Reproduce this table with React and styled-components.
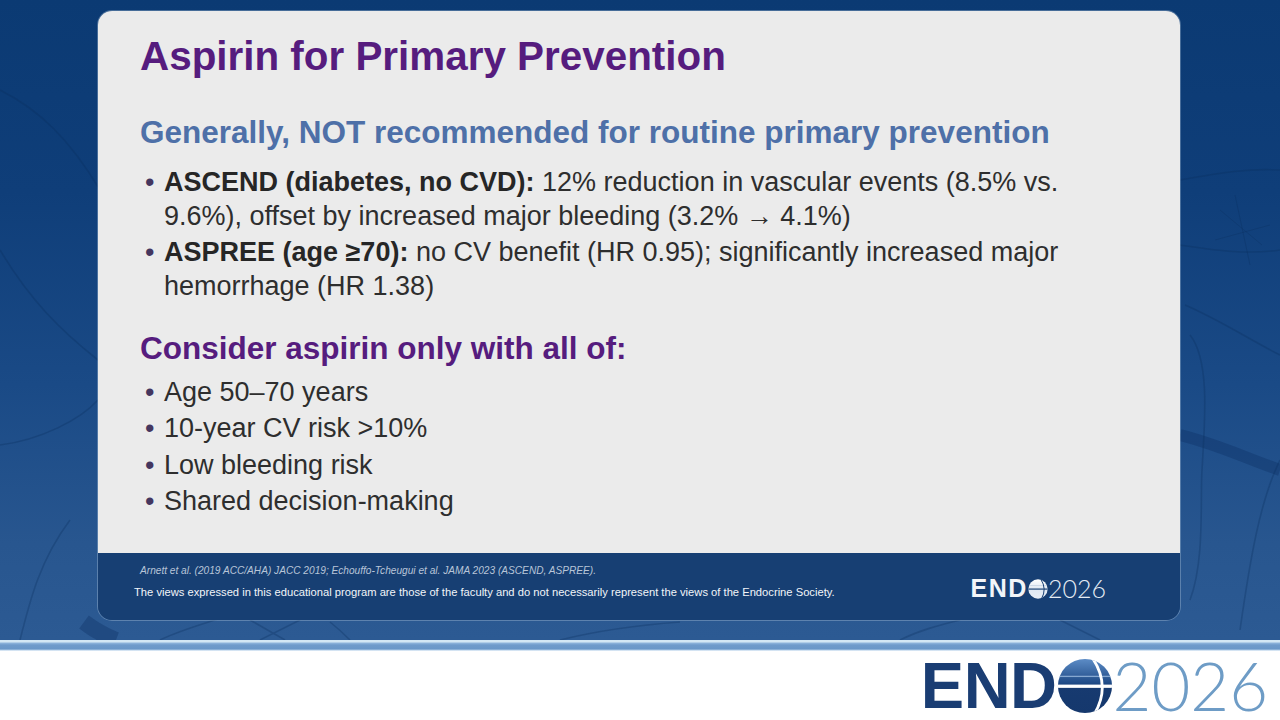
import React from "react";
import styled, { createGlobalStyle } from "styled-components";

const Global = createGlobalStyle`
  html, body { margin: 0; padding: 0; background: #ffffff; }
  body { font-family: "Liberation Sans", Arial, sans-serif; }
`;

const Page = styled.div`
  width: 1280px;
  height: 720px;
  display: flex;
  flex-direction: column;
  overflow: hidden;
  background: #ffffff;
`;

const Stage = styled.div`
  position: relative;
  height: 640px;
  flex: none;
  padding: 11px 0 0 98px;
  box-sizing: border-box;
  background: linear-gradient(180deg, #0b3a73 0%, #0f3e79 30%, #1a4a86 60%, #28568f 85%, #2c5a93 100%);
  overflow: hidden;
`;

const BgArt = styled.svg`
  position: absolute;
  inset: 0;
  width: 100%;
  height: 100%;
  z-index: 0;
  pointer-events: none;
`;

const Panel = styled.div`
  position: relative;
  z-index: 1;
  width: 1082px;
  height: 609px;
  border-radius: 14px;
  overflow: hidden;
  display: flex;
  flex-direction: column;
  box-shadow: 0 0 0 1px rgba(210, 225, 240, 0.3);
`;

const Body = styled.div`
  flex: 1;
  background: #ebebeb;
  padding: 21px 42px 0 42px;
  display: flex;
  flex-direction: column;
`;

const Title = styled.h1`
  margin: 0;
  font-size: 40.4px;
  line-height: 48px;
  font-weight: 700;
  color: #561c7e;
`;

const Heading = styled.h2`
  margin: ${(p) => p.$mt}px 0 0 0;
  font-size: 31.5px;
  line-height: 40px;
  font-weight: 700;
  color: ${(p) => p.$color};
`;

const List = styled.ul`
  list-style: none;
  margin: ${(p) => p.$mt}px 0 0 0;
  padding: 0;
  display: flex;
  flex-direction: column;
  gap: ${(p) => p.$gap}px;
`;

const Item = styled.li`
  display: flex;
  font-size: 27px;
  line-height: 34px;
  color: #2e2e2e;
`;

const Bullet = styled.span`
  flex: none;
  width: 19px;
  padding-left: 5px;
  color: #44365f;
`;

const ItemText = styled.span`
  flex: 1;
  max-width: 920px;
`;

const Strong = styled.b`
  font-weight: 700;
  color: #262626;
`;

const Footer = styled.div`
  height: 67px;
  flex: none;
  background: #173f73;
  display: flex;
  align-items: flex-start;
  justify-content: space-between;
  padding: 0 74px 0 36px;
`;

const FooterTexts = styled.div`
  display: flex;
  flex-direction: column;
  padding-top: 11px;
`;

const Citation = styled.div`
  font-size: 10.15px;
  line-height: 14px;
  font-style: italic;
  color: #b7c5d8;
  padding-left: 6px;
`;

const Disclaimer = styled.div`
  margin-top: 7px;
  font-size: 11.2px;
  line-height: 14px;
  color: #f2f5f9;
`;

const Logo = styled.div`
  display: flex;
  align-items: center;
  margin-top: ${(p) => p.$mt || 0}px;
`;

const LogoEnd = styled.span`
  font-family: "Liberation Sans", Arial, sans-serif;
  font-weight: 700;
  font-size: ${(p) => p.$size}px;
  line-height: 1;
  letter-spacing: ${(p) => p.$ls}px;
  color: ${(p) => p.$color};
`;

const LogoYear = styled.span`
  font-family: Lato, "Open Sans", sans-serif;
  font-weight: 300;
  font-size: ${(p) => p.$size}px;
  line-height: 1;
  letter-spacing: ${(p) => p.$ls}px;
  color: ${(p) => p.$color};
`;

const Stripes = styled.div`
  height: 11px;
  flex: none;
  background: linear-gradient(180deg, #d3e7f4 0px, #d3e7f4 2px, #8fb5dc 3px, #6f9bcb 5px, #6a97c8 9px, #a9c8e6 10px, #ffffff 11px);
`;

const BottomBar = styled.div`
  flex: 1;
  background: #ffffff;
  display: flex;
  justify-content: flex-end;
  align-items: center;
  padding-right: 12px;
`;

function Globe({ size, variant }) {
  const dark = variant === "dark";
  const id = dark ? "gd" : "gl";
  return (
    <svg width={size} height={size} viewBox="0 0 60 60" style={{ flex: "none" }}>
      <defs>
        <linearGradient id={id} x1="0" y1="0" x2="0" y2="1">
          {dark ? (
            <>
              <stop offset="0" stopColor="#5c8cc6" />
              <stop offset="0.45" stopColor="#1f4a86" />
              <stop offset="0.5" stopColor="#173a70" />
              <stop offset="1" stopColor="#15386d" />
            </>
          ) : (
            <>
              <stop offset="0" stopColor="#ffffff" />
              <stop offset="0.5" stopColor="#dfe8f2" />
              <stop offset="1" stopColor="#e9eef5" />
            </>
          )}
        </linearGradient>
        <clipPath id={id + "c"}>
          <circle cx="30" cy="30" r="29" />
        </clipPath>
      </defs>
      <circle cx="30" cy="30" r="29" fill={`url(#${id})`} />
      <g clipPath={`url(#${id}c)`}>
        <rect x="0" y="28.5" width="60" height="3.5" fill={dark ? "#ffffff" : "#173f73"} />
        <rect x="0" y="19" width="60" height="1.4" fill={dark ? "#9cbbe0" : "#9fb4cf"} opacity="0.8" />
        <path d="M38 0 Q58 30 40 60" fill="none" stroke={dark ? "#ffffff" : "#173f73"} strokeWidth="3" />
      </g>
    </svg>
  );
}

function Background() {
  return (
    <BgArt viewBox="0 0 1280 640" preserveAspectRatio="none">
      <g fill="none" stroke="#0a2d5c" strokeOpacity="0.3" strokeWidth="1.6">
        <path d="M0 90 C 40 110, 70 140, 100 190" />
        <path d="M0 250 C 30 300, 60 330, 98 360" />
        <path d="M0 445 C 40 440, 80 420, 98 400" />
        <path d="M20 640 C 30 600, 40 560, 70 520" />
        <path d="M1180 180 C 1210 175, 1240 168, 1280 170" />
        <path d="M1180 245 C 1215 250, 1245 255, 1280 250" />
        <path d="M1185 305 C 1220 320, 1250 340, 1280 355" />
        <path d="M1190 335 C 1210 360, 1205 420, 1202 470 C 1200 500, 1205 560, 1190 600" />
        <path d="M1280 460 C 1260 500, 1250 560, 1240 630" />
        <path d="M1220 210 L 1262 245 M 1235 195 L 1250 265 M 1215 240 L 1270 225" strokeWidth="1" />
        <path d="M160 640 C 180 630, 200 625, 230 615" />
        <path d="M250 620 L 285 640 M 260 640 L 300 620" />
        <path d="M330 622 C 340 630, 345 635, 350 640" />
        <path d="M560 640 C 600 630, 640 625, 680 622" />
        <path d="M900 640 C 920 630, 940 625, 960 620" />
        <path d="M1100 640 C 1080 630, 1070 625, 1060 620" />
      </g>
      <g stroke="#0b2f62" strokeOpacity="0.35" fill="none">
        <path d="M1180 435 C 1220 445, 1250 460, 1280 470" strokeWidth="12" />
        <path d="M84 622 C 92 628, 100 634, 116 640" strokeWidth="16" />
      </g>
    </BgArt>
  );
}

export default function App() {
  return (
    <Page>
      <Global />
      <Stage>
        <Background />
        <Panel>
          <Body>
            <Title>Aspirin for Primary Prevention</Title>
            <Heading $mt={32} $color="#4e70a8">
              Generally, NOT recommended for routine primary prevention
            </Heading>
            <List $mt={13} $gap={2}>
              <Item>
                <Bullet>•</Bullet>
                <ItemText>
                  <Strong>ASCEND (diabetes, no CVD):</Strong> 12% reduction in vascular events (8.5% vs.
                  9.6%), offset by increased major bleeding (3.2% → 4.1%)
                </ItemText>
              </Item>
              <Item>
                <Bullet>•</Bullet>
                <ItemText>
                  <Strong>ASPREE (age ≥70):</Strong> no CV benefit (HR 0.95); significantly increased major
                  hemorrhage (HR 1.38)
                </ItemText>
              </Item>
            </List>
            <Heading $mt={25} $color="#561c7e">
              Consider aspirin only with all of:
            </Heading>
            <List $mt={7} $gap={2.4}>
              <Item>
                <Bullet>•</Bullet>
                <ItemText>Age 50–70 years</ItemText>
              </Item>
              <Item>
                <Bullet>•</Bullet>
                <ItemText>10-year CV risk &gt;10%</ItemText>
              </Item>
              <Item>
                <Bullet>•</Bullet>
                <ItemText>Low bleeding risk</ItemText>
              </Item>
              <Item>
                <Bullet>•</Bullet>
                <ItemText>Shared decision-making</ItemText>
              </Item>
            </List>
          </Body>
          <Footer>
            <FooterTexts>
              <Citation>
                Arnett et al. (2019 ACC/AHA) JACC 2019; Echouffo-Tcheugui et al. JAMA 2023 (ASCEND, ASPREE).
              </Citation>
              <Disclaimer>
                The views expressed in this educational program are those of the faculty and do not necessarily
                represent the views of the Endocrine Society.
              </Disclaimer>
            </FooterTexts>
            <Logo $mt={23}>
              <LogoEnd $size={25} $ls={1.6} $color="#f2f5f9">END</LogoEnd>
              <Globe size={20} variant="light" />
              <LogoYear $size={25} $ls={0} $color="#e6ecf4">2026</LogoYear>
            </Logo>
          </Footer>
        </Panel>
      </Stage>
      <Stripes />
      <BottomBar>
        <Logo>
          <LogoEnd $size={65} $ls={-0.5} $color="#1a3d73">END</LogoEnd>
          <Globe size={56} variant="dark" />
          <LogoYear $size={67} $ls={0} $color="#6e9cc6">2026</LogoYear>
        </Logo>
      </BottomBar>
    </Page>
  );
}
